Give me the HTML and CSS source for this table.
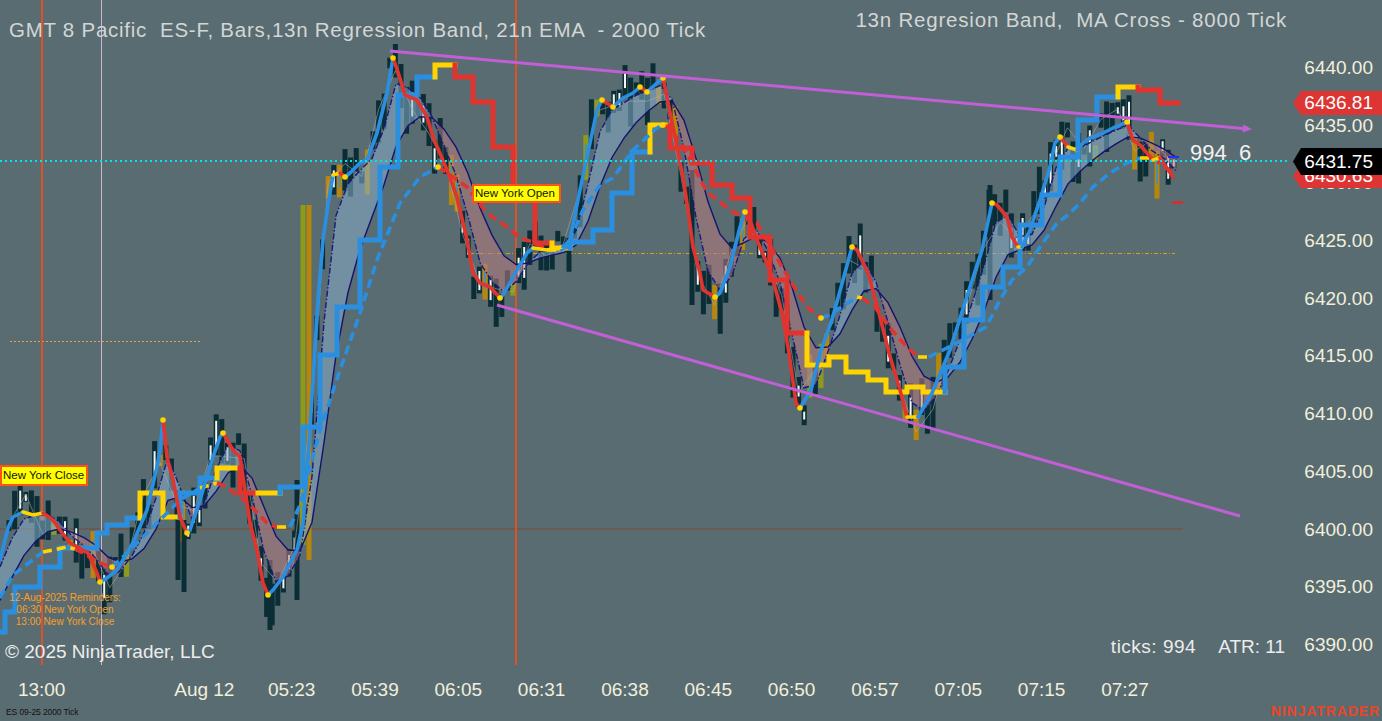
FILE: index.html
```html
<!DOCTYPE html>
<html lang="en">
<head>
<meta charset="utf-8">
<title>ES-F 2000 Tick - NinjaTrader</title>
<link rel="stylesheet" href="styles.css">
</head>
<body>
<div class="screen">
  <div class="plot">
    <svg class="chart" width="1290" height="672" viewBox="0 0 1290 672"></svg>
    <div class="title-left">GMT 8 Pacific  ES-F, Bars,13n Regression Band, 21n EMA  - 2000 Tick</div>
    <div class="title-right">13n Regresion Band,  MA Cross - 8000 Tick</div>
    <div class="tag tag-open">New York Open</div>
    <div class="tag tag-close">New York Close</div>
    <div class="reminders">
      <div>12-Aug-2025 Reminders:</div>
      <div>06:30 New York Open</div>
      <div>13:00 New York Close</div>
    </div>
    <div class="tick-count">994  6</div>
    <div class="copyright">© 2025 NinjaTrader, LLC</div>
    <div class="stats"><span>ticks: 994</span><span>ATR: 11</span></div>
  </div>
  <div class="price-axis">
    <div class="price">6440.00</div>
    <div class="price">6435.00</div>
    <div class="price">6430.00</div>
    <div class="price">6425.00</div>
    <div class="price">6420.00</div>
    <div class="price">6415.00</div>
    <div class="price">6410.00</div>
    <div class="price">6405.00</div>
    <div class="price">6400.00</div>
    <div class="price">6395.00</div>
    <div class="price">6390.00</div>
    <div class="flag flag-red flag-hi">6436.81</div>
    <div class="flag flag-red flag-lo">6430.63</div>
    <div class="flag flag-black">6431.75</div>
  </div>
  <div class="bottom">
    <div class="time-row">
      <span>13:00</span><span></span><span class="shift">Aug 12</span><span>05:23</span><span>05:39</span><span>06:05</span><span>06:31</span><span>06:38</span><span>06:45</span><span>06:50</span><span>06:57</span><span>07:05</span><span>07:15</span><span>07:27</span>
    </div>
    <div class="foot-row">
      <span class="series">ES 09-25 2000 Tick</span>
      <span class="brand">NINJATRADER</span>
    </div>
  </div>
</div>
<script src="script.js"></script>
</body>
</html>
```

FILE: styles.css
```css
* { box-sizing: border-box; }
html, body { margin: 0; padding: 0; }
body {
  background: #596c71;
  font-family: "Liberation Sans", Arial, sans-serif;
  overflow: hidden;
}
.screen {
  width: 1382px;
  height: 721px;
  display: grid;
  grid-template-columns: 1290px 92px;
  grid-template-rows: 672px 49px;
}
.plot {
  position: relative;
  overflow: hidden;
}
.chart { display: block; }

.title-left {
  position: absolute;
  left: 9px;
  top: 18px;
  font-size: 20.5px;
  letter-spacing: 0.75px;
  line-height: 24px;
  color: #d3d6d6;
  white-space: pre;
}
.title-right {
  position: absolute;
  right: 3px;
  top: 8px;
  font-size: 20.5px;
  letter-spacing: 0.8px;
  line-height: 24px;
  color: #d3d6d6;
  white-space: pre;
}
.tag {
  position: absolute;
  background: #ffff00;
  border: 2px solid #ff5214;
  color: #111;
  font-size: 11.5px;
  line-height: 15px;
  padding-left: 1px;
  white-space: nowrap;
  overflow: hidden;
}
.tag-open { left: 472px; top: 184px; width: 89px; height: 19px; }
.tag-close { left: 0; top: 465px; width: 88px; height: 21px; line-height: 17px; }

.reminders {
  position: absolute;
  left: 8px;
  top: 592px;
  width: 114px;
  text-align: center;
  color: #f5a02e;
  font-size: 10px;
  line-height: 11.8px;
  white-space: nowrap;
}
.tick-count {
  position: absolute;
  left: 1190px;
  top: 141px;
  font-size: 22px;
  line-height: 24px;
  color: #f2f2f2;
  white-space: pre;
}
.copyright {
  position: absolute;
  left: 5px;
  top: 641px;
  font-size: 19px;
  line-height: 22px;
  color: #ececec;
}
.stats {
  position: absolute;
  right: 5px;
  top: 636px;
  display: flex;
  gap: 22px;
  font-size: 19px;
  line-height: 22px;
  color: #ececec;
}
.stats span:first-child { letter-spacing: 0.5px; }

.price-axis {
  position: relative;
  padding-top: 39px;
  display: flex;
  flex-direction: column;
}
.price {
  height: 57.7px;
  line-height: 57.7px;
  text-align: right;
  padding-right: 9px;
  font-size: 19px;
  color: #f2efdc;
}
.flag {
  position: absolute;
  left: 3px;
  width: 89px;
  text-align: right;
  padding-right: 9px;
  font-size: 19px;
  color: #ffffff;
  clip-path: polygon(8px 0, 100% 0, 100% 100%, 8px 100%, 0 50%);
}
.flag-red { background: #dd3434; height: 24px; line-height: 24px; }
.flag-hi { top: 91px; }
.flag-lo { top: 164px; }
.flag-black { background: #000; top: 148px; height: 27px; line-height: 27px; }

.bottom {
  grid-column: 1 / 3;
  display: flex;
  flex-direction: column;
}
.time-row {
  display: grid;
  grid-template-columns: repeat(14, 83.33px);
  height: 36px;
  line-height: 36px;
  font-size: 19px;
  color: #f2efdc;
}
.time-row span { text-align: center; }
.time-row .shift { padding-right: 8px; }
.foot-row {
  display: flex;
  justify-content: space-between;
  align-items: flex-start;
  height: 13px;
}
.series {
  padding-left: 6px;
  font-size: 8.5px;
  line-height: 9px;
  color: #121212;
  letter-spacing: -0.1px;
}
.brand {
  padding-right: 2px;
  font-size: 14px;
  line-height: 7px;
  font-weight: bold;
  letter-spacing: 0.9px;
  color: #e8462c;
}
```

FILE: script.js
```js
(function () {
  var svg = document.querySelector('.chart');
  var out = [];
  var BLUE = '#2a8fe0', RED = '#e2342f', YEL = '#ffd400';

  var seed = 20250812;
  function rnd() { seed = (seed * 16807) % 2147483647; return seed / 2147483647; }
  function fmt(p) { return p[0].toFixed(1) + ',' + p[1].toFixed(1); }
  function poly(points, attrs) {
    out.push('<polyline points="' + points.map(fmt).join(' ') + '" fill="none" ' + attrs + '/>');
  }
  function line(x1, y1, x2, y2, attrs) {
    out.push('<line x1="' + x1 + '" y1="' + y1 + '" x2="' + x2 + '" y2="' + y2 + '" ' + attrs + '/>');
  }
  function rect(x, y, w, h, c, extra) {
    out.push('<rect x="' + x.toFixed(1) + '" y="' + y.toFixed(1) + '" width="' + w + '" height="' + Math.max(1, h).toFixed(1) + '" fill="' + c + '"' + (extra || '') + '/>');
  }
  function interp(P, x) {
    if (x <= P[0][0]) return P[0][1];
    for (var i = 1; i < P.length; i++) {
      if (x <= P[i][0]) {
        var a = P[i - 1], b = P[i];
        return a[1] + (b[1] - a[1]) * (x - a[0]) / (b[0] - a[0]);
      }
    }
    return P[P.length - 1][1];
  }

  var FAST = [[0,560],[8,528],[13,517],[23,512],[33,515],[43,513],[53,520],[60,530],[70,543],[78,547],[88,553],[97,573],[100,582],[107,578],[117,570],[133,543],[147,510],[157,467],[160,450],[163,420],[167,457],[173,480],[177,500],[180,517],[187,533],[190,530],[200,500],[213,457],[220,437],[223,433],[233,450],[240,457],[243,477],[250,523],[257,550],[263,583],[268,595],[273,590],[283,577],[290,563],[297,550],[303,523],[308,460],[313,380],[318,300],[323,240],[328,205],[333,175],[340,173],[345,177],[350,173],[360,163],[367,160],[377,133],[387,93],[393,58],[398,72],[405,95],[417,100],[427,117],[433,137],[447,170],[457,197],[467,240],[473,273],[480,283],[490,287],[500,298],[503,295],[513,277],[527,253],[533,248],[547,250],[563,247],[570,240],[580,190],[590,143],[597,110],[602,100],[613,107],[623,98],[633,93],[640,87],[647,92],[657,83],[663,78],[673,127],[683,177],[688,210],[693,247],[700,273],[703,290],[715,297],[720,293],[730,267],[740,227],[745,212],[750,220],[757,240],[771,273],[782,313],[789,353],[796,403],[800,408],[811,390],[821,350],[832,320],[843,280],[852,247],[857,250],[868,273],[879,313],[889,353],[900,390],[907,417],[918,417],[932,393],[950,350],[968,293],[982,250],[992,203],[997,205],[1007,217],[1012,237],[1018,247],[1022,247],[1030,230],[1040,200],[1050,167],[1055,143],[1060,137],[1068,147],[1077,150],[1083,143],[1090,138],[1103,133],[1113,128],[1127,122],[1133,140],[1140,145],[1147,153],[1153,160],[1160,158],[1173,177]];

  var DASH = [[0,598],[13,575],[43,552],[67,547],[75,549],[83,553],[100,563],[112,567],[125,555],[140,540],[160,520],[180,500],[200,488],[217,483],[227,487],[250,505],[267,523],[277,527],[290,527],[300,505],[320,430],[340,370],[360,313],[377,260],[400,203],[420,177],[438,167],[443,170],[467,187],[487,213],[507,227],[520,238],[533,242],[547,250],[560,250],[567,247],[573,233],[583,210],[600,185],[613,178],[633,150],[657,128],[663,125],[670,128],[685,150],[707,192],[733,212],[757,223],[771,247],[782,267],[796,290],[807,307],[821,318],[830,315],[840,308],[857,297],[862,298],[875,307],[889,327],[907,347],[918,357],[929,357],[957,343],[986,327],[1000,300],[1012,280],[1027,267],[1040,247],[1057,223],[1068,215],[1080,203],[1093,187],[1110,173],[1127,163],[1140,158],[1153,158],[1173,173]];

  var STAIR = [
    ['b', [[0,632],[5,632],[5,612],[15,612],[15,587],[40,587],[40,567],[60,567],[60,548],[97,548],[97,533],[107,533],[107,525],[127,525],[127,518],[140,518]]],
    ['y', [[140,518],[140,493],[163,493],[163,517],[180,517]]],
    ['b', [[180,517],[180,493],[200,493],[200,478],[217,478]]],
    ['y', [[217,478],[217,468],[240,468]]],
    ['r', [[240,468],[240,493],[258,493]]],
    ['y', [[258,493],[280,493]]],
    ['b', [[280,493],[280,487],[303,487],[303,427],[320,427],[320,355],[337,355],[337,307],[360,307],[360,240],[380,240],[380,167],[398,167],[398,95],[417,95],[417,77],[435,77]]],
    ['y', [[435,77],[435,65],[455,65]]],
    ['r', [[455,65],[455,77],[473,77],[473,102],[493,102],[493,147],[513,147],[513,187],[535,187],[535,243],[552,243]]],
    ['y', [[552,243],[552,248],[570,248]]],
    ['b', [[570,248],[570,242],[593,242],[593,230],[612,230],[612,193],[632,193],[632,152],[650,152]]],
    ['y', [[650,152],[650,125],[670,125]]],
    ['r', [[670,125],[670,148],[692,148],[692,163],[712,163],[712,185],[732,185],[732,198],[750,198],[750,237],[770,237],[770,280],[787,280],[787,333],[807,333]]],
    ['y', [[807,333],[807,365],[829,365],[829,357],[846,357],[846,372],[868,372],[868,380],[886,380],[886,392],[907,392],[907,387],[923,387],[923,392],[945,392]]],
    ['b', [[945,392],[945,367],[964,367],[964,320],[983,320],[983,287],[1003,287],[1003,267],[1020,267],[1020,225],[1042,225],[1042,195],[1060,195],[1060,157],[1078,157],[1078,120],[1097,120],[1097,97],[1118,97]]],
    ['y', [[1118,97],[1118,87],[1138,87]]],
    ['r', [[1138,87],[1138,90],[1160,90],[1160,103],[1178,103]]]
  ];
  var CMAP = { b: BLUE, r: RED, y: YEL };

  /* reference lines */
  line(0, 529, 1183, 529, 'stroke="#7b4a33" stroke-width="1"');
  line(470, 253.5, 1175, 253.5, 'stroke="#d9a400" stroke-width="1" stroke-dasharray="4 2 1 2"');
  line(10, 341.5, 200, 341.5, 'stroke="#e2a54a" stroke-width="1" stroke-dasharray="2 2"');
  line(42, 0, 42, 665, 'stroke="#ff4b12" stroke-width="1.6"');
  line(516, 0, 516, 665, 'stroke="#ff4b12" stroke-width="1.6"');
  line(101.5, 0, 101.5, 665, 'stroke="#c9b4d6" stroke-width="1"');

  /* bars */
  var DARK = '#0b2e36', GOLD = '#b8860b', OLIVE = '#8e9b1a';
  var zig = [];
  var n = 0;
  for (var x = 9; x <= 1176; x += 5.6) {
    var f = interp(FAST, x);
    var mid = f + (rnd() - 0.5) * 34;
    var h = 10 + rnd() * 42;
    var top = mid - h / 2;
    var r = rnd();
    var col = r < 0.09 ? GOLD : (r < 0.13 ? OLIVE : DARK);
    rect(x - 2.5, top, 5, h, col);
    if (col === DARK && rnd() < 0.42) {
      var bt = top + h * (0.1 + rnd() * 0.25);
      var bb = top + h * (0.65 + rnd() * 0.25);
      rect(x - 1, bt, 2, bb - bt, '#f4f4f4');
    } else if (col !== DARK && rnd() < 0.5) {
      rect(x - 1, top + h * 0.2, 2, h * 0.5, '#2a8fe0', ' opacity="0.7"');
    }
    if (n % 3 === 0) zig.push([x, mid + (rnd() - 0.5) * h * 0.6]);
    n++;
  }
  var EXTRA = [[297, 480, 600, DARK], [303, 205, 545, OLIVE], [309, 205, 560, GOLD], [270, 560, 630, DARK], [184, 520, 592, DARK], [178, 490, 580, DARK], [692, 170, 305, DARK], [990, 185, 300, DARK]];
  EXTRA.forEach(function (b) { rect(b[0] - 2.5, b[1], 5, b[2] - b[1], b[3]); });

  /* regression band */
  var A = FAST[0][1] + 8, B = FAST[0][1] + 42;
  var sa = [], sb = [];
  for (var px = 0; px <= 1176; px++) {
    var fv = interp(FAST, px);
    A += 0.12 * (fv - A);
    B += 0.035 * (fv - B);
    if (px % 12 === 0 || px === 1176) { sa.push([px, A]); sb.push([px, B]); }
  }
  for (var k = 0; k < sa.length - 1; k++) {
    var up = (sa[k][1] + sa[k + 1][1]) < (sb[k][1] + sb[k + 1][1]);
    var c = up ? '#86aecb' : '#b87c80';
    out.push('<polygon points="' + [sa[k], sa[k + 1], sb[k + 1], sb[k]].map(fmt).join(' ') + '" fill="' + c + '" opacity="0.55"/>');
  }
  poly(zig, 'stroke="#a9adad" stroke-width="0.8" opacity="0.7"');
  poly(sa, 'stroke="#1b1880" stroke-width="1.4" stroke-dasharray="6 2 1.5 2"');
  poly(sb, 'stroke="#15136e" stroke-width="1.4"');

  /* staircase */
  STAIR.forEach(function (s) {
    poly(s[1], 'stroke="' + CMAP[s[0]] + '" stroke-width="5" stroke-linejoin="miter" stroke-linecap="square"');
  });

  /* direction-coloured lines */
  function colored(P, thr, attrs, dots) {
    var runs = [];
    for (var i = 0; i < P.length - 1; i++) {
      var a = P[i], b = P[i + 1];
      var s = (b[1] - a[1]) / (b[0] - a[0]);
      var cc = s < -thr ? 'b' : (s > thr ? 'r' : 'y');
      var last = runs[runs.length - 1];
      if (last && last.c === cc) last.p.push(b);
      else runs.push({ c: cc, p: [a, b] });
    }
    runs.forEach(function (rn) { poly(rn.p, 'stroke="' + CMAP[rn.c] + '" ' + attrs); });
    if (dots) {
      for (var j = 1; j < runs.length; j++) {
        if (runs[j].c !== 'y' && runs[j - 1].c !== 'y') {
          var q = runs[j].p[0];
          out.push('<circle cx="' + q[0] + '" cy="' + q[1] + '" r="2.8" fill="' + YEL + '"/>');
        }
      }
    }
  }
  colored(DASH, 0.3, 'stroke-width="3.6" stroke-dasharray="9 5" stroke-linejoin="round"', true);
  colored(FAST, 0.35, 'stroke-width="3.6" stroke-linejoin="round" stroke-linecap="round"', true);

  /* trend lines */
  line(390, 51, 1243, 128.4, 'stroke="#c25fd6" stroke-width="3"');
  out.push('<polygon points="1252,129.3 1243.4,124.4 1242.6,132.4" fill="#c25fd6"/>');
  line(497, 305, 1240, 516, 'stroke="#c25fd6" stroke-width="3"');

  /* last price line and markers */
  line(0, 161, 1293, 161, 'stroke="#00e6ef" stroke-width="2" stroke-dasharray="2 3"');
  line(1168, 157, 1179, 157, 'stroke="#1634ff" stroke-width="2"');
  line(1172, 202.5, 1183, 202.5, 'stroke="#ff1a1a" stroke-width="2"');

  svg.innerHTML = out.join('');
})();
```
